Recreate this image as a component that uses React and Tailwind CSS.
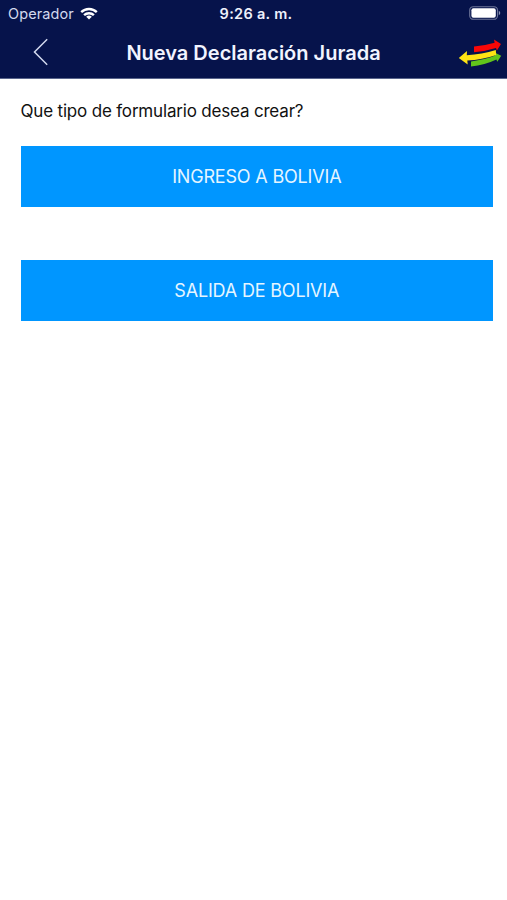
function StatusBar() {
  return (
    <div className="grid h-7 grid-cols-3 items-center pr-[6px] pl-2 text-[15px] text-[#d3d9ee]">
      <div className="flex items-center gap-[6px]">
        <span className="text-[14.5px] tracking-[0.1px]">Operador</span>
        <svg className="-mt-[2px]" width="18" height="13" viewBox="0 0 18 13" fill="none" stroke="#fff" strokeWidth="2.4">
          <path d="M1.2 5.2a11.2 11.2 0 0 1 15.6 0" />
          <path d="M4.1 8.2a7 7 0 0 1 9.8 0" />
          <path d="M9 12.6 6.2 9.8a4 4 0 0 1 5.6 0z" fill="#fff" stroke="none" />
        </svg>
      </div>
      <span className="pl-[3px] text-center text-[14.5px] font-semibold tracking-[0.3px] whitespace-nowrap text-[#eef1fb]">9:26 a. m.</span>
      <svg className="-mt-[2px] justify-self-end" width="32" height="14" viewBox="0 0 32 14">
        <rect x="0.7" y="0.7" width="27.8" height="12.6" rx="3.6" fill="none" stroke="#6d7599" strokeWidth="1.1" />
        <rect x="2.4" y="2.2" width="24.4" height="9.6" rx="2" fill="#fff" />
        <path d="M29.8 4.8v4.4q1.5-.8 1.5-2.2t-1.5-2.2z" fill="#8c93b4" />
      </svg>
    </div>
  );
}

function ArrowsLogo() {
  return (
    <svg className="justify-self-end" width="44" height="28" viewBox="0 0 44 28">
      <path d="M16 7.6Q27 6.6 36.6 3.8L36 0.4 43 5 38.9 11.6 38 9Q28 12.2 16 13.2z" fill="#fa0707" />
      <path d="M13 22.4Q27 20.8 37.2 16.6L36.6 13.6 43.2 16.8 39.3 22.8 38.4 20.6Q27 26.2 13 27.4z" fill="#62c51b" />
      <path d="M0.8 18.9 9 12 8.8 16.2Q24 15.6 37.8 11.1L38.2 16Q24 21 9.3 21.4L9.7 25.4z" fill="#ffe414" />
    </svg>
  );
}

function FormButton({ children }) {
  return (
    <button className="flex h-[61px] w-full items-center justify-center bg-[#0096ff] text-[18px] tracking-[-0.18px] text-[#e5f5ff]">
      {children}
    </button>
  );
}

export default function App() {
  return (
    <div className="min-h-screen bg-white font-['Inter','Liberation_Sans',sans-serif]">
      <header className="h-[79px] border-b border-[#59658c] bg-[#06134b]">
        <StatusBar />
        <div className="grid h-[49px] grid-cols-[80px_1fr_80px] items-center pr-[5px]">
          <button className="-mt-px pl-[33px]" aria-label="Volver">
            <svg width="16" height="28" viewBox="0 0 16 28" fill="none" stroke="#d3d9ee" strokeWidth="1.5">
              <path d="M14.2 1.3 1.5 14 14.2 26.7" />
            </svg>
          </button>
          <h1 className="pl-[5px] text-center text-[20px] font-semibold whitespace-nowrap text-[#f1f4ff]">Nueva Declaración Jurada</h1>
          <ArrowsLogo />
        </div>
      </header>
      <main className="pt-5 pr-[14px] pl-[20.5px]">
        <p className="text-[17px] leading-6 tracking-[-0.18px] text-[#111]">Que tipo de formulario desea crear?</p>
        <div className="mt-[22.5px] flex flex-col gap-[53px]">
          <FormButton>INGRESO A BOLIVIA</FormButton>
          <FormButton>SALIDA DE BOLIVIA</FormButton>
        </div>
      </main>
    </div>
  );
}
